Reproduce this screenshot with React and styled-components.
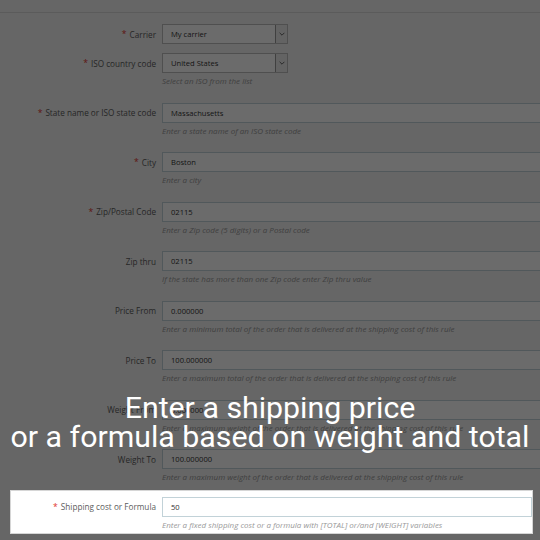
import React from "react";
import styled, { createGlobalStyle } from "styled-components";

const fields = [
  { label: "Carrier", required: true, value: "My carrier", select: true },
  {
    label: "ISO country code",
    required: true,
    value: "United States",
    select: true,
    help: "Select an ISO from the list",
  },
  {
    label: "State name or ISO state code",
    required: true,
    value: "Massachusetts",
    help: "Enter a state name of an ISO state code",
  },
  { label: "City", required: true, value: "Boston", help: "Enter a city" },
  {
    label: "Zip/Postal Code",
    required: true,
    value: "02115",
    help: "Enter a Zip code (5 digits) or a Postal code",
  },
  {
    label: "Zip thru",
    value: "02115",
    help: "If the state has more than one Zip code enter Zip thru value",
  },
  {
    label: "Price From",
    value: "0.000000",
    help: "Enter a minimum total of the order that is delivered at the shipping cost of this rule",
  },
  {
    label: "Price To",
    value: "100.000000",
    help: "Enter a maximum total of the order that is delivered at the shipping cost of this rule",
  },
  {
    label: "Weight From",
    value: "0.000000",
    help: "Enter a maximum weight of the order that is delivered at the shipping cost of this rule",
  },
  {
    label: "Weight To",
    value: "100.000000",
    help: "Enter a maximum weight of the order that is delivered at the shipping cost of this rule",
  },
];

export default function App() {
  return (
    <>
      <GlobalStyle />
      <Page>
        <PanelHeader />
        <Form>
          {fields.map((f) => (
            <FieldRow key={f.label} {...f} />
          ))}
          <Spotlight>
            <FieldRow
              label="Shipping cost or Formula"
              required
              value="50"
              help="Enter a fixed shipping cost or a formula with [TOTAL] or/and [WEIGHT] variables"
              labelWidth={145}
            />
          </Spotlight>
        </Form>
        <Dim />
        <Caption>
          Enter a shipping price
          <br />
          or a formula based on weight and total
        </Caption>
      </Page>
    </>
  );
}

function FieldRow({ label, required, value, select, help, labelWidth = 156 }) {
  return (
    <Group $help={!!help} $labelWidth={labelWidth}>
      <Label>
        {required && <Star>*</Star>}
        {label}
      </Label>
      <div>
        {select ? (
          <Select>
            <span>{value}</span>
            <Caret>
              <svg width="6" height="4" viewBox="0 0 6 4">
                <path d="M0.6 0.8 L3 3.2 L5.4 0.8" fill="none" stroke="#555" strokeWidth="0.9" />
              </svg>
            </Caret>
          </Select>
        ) : (
          <Input>{value}</Input>
        )}
        {help && <Help>{help}</Help>}
      </div>
    </Group>
  );
}

const GlobalStyle = createGlobalStyle`
  html, body {
    margin: 0;
    overflow: hidden;
    background: #f2f2f2;
  }
  body {
    font-family: "Open Sans", "DejaVu Sans", sans-serif;
  }
`;

const Page = styled.div`
  position: relative;
  width: 540px;
  height: 540px;
  overflow: hidden;
  background: #f2f2f2;
`;

const PanelHeader = styled.div`
  height: 12px;
  border-bottom: 1px solid #d8d8d8;
`;

const Form = styled.div`
  padding-top: 11px;
  width: 640px;
`;

const Group = styled.div`
  display: grid;
  grid-template-columns: ${(p) => p.$labelWidth}px 1fr;
  column-gap: 6px;
  margin-bottom: ${(p) => (p.$help ? "15.5px" : "9px")};
`;

const Label = styled.div`
  height: 20px;
  display: flex;
  align-items: center;
  justify-content: flex-end;
  font-size: 8.2px;
  color: #5c5c5c;
  white-space: nowrap;
`;

const Star = styled.span`
  color: #e0322d;
  margin-right: 3px;
  font-size: 8.6px;
`;

const Input = styled.div`
  box-sizing: border-box;
  height: 20px;
  display: flex;
  align-items: center;
  padding-left: 8px;
  background: #fff;
  border: 1px solid #c2d2d8;
  font-size: 7.6px;
  color: #333;
`;

const Select = styled(Input)`
  width: 126px;
  padding-right: 0;
  justify-content: space-between;
  border-color: #bcbcbc;
`;

const Caret = styled.div`
  align-self: stretch;
  width: 11px;
  display: flex;
  align-items: center;
  justify-content: center;
  background: #ececec;
  border-left: 1px solid #999;
`;

const Help = styled.div`
  margin-top: 2px;
  line-height: 12px;
  font-size: 8px;
  font-style: italic;
  color: #999;
  white-space: nowrap;
`;

const Spotlight = styled.div`
  position: relative;
  z-index: 2;
  width: 521px;
  margin: -9px 0 0 10px;
  padding: 6px 0 2px;
  background: #fff;
  border: 1px solid #d6d6d6;
  overflow: hidden;

  & > div {
    margin-bottom: 0;
  }
`;

const Dim = styled.div`
  position: absolute;
  inset: 0;
  z-index: 1;
  background: rgba(0, 0, 0, 0.58);
`;

const Caption = styled.div`
  position: absolute;
  z-index: 3;
  left: 0;
  right: 0;
  top: 393px;
  text-align: center;
  font-family: Roboto, "Liberation Sans", sans-serif;
  font-size: 30.3px;
  line-height: 29px;
  color: #fff;
  white-space: nowrap;
`;
